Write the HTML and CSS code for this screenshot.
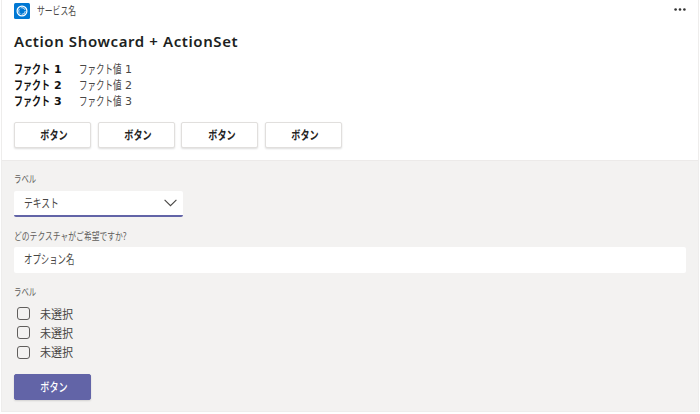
FILE: index.html
```html
<!DOCTYPE html>
<html lang="ja">
<head>
<meta charset="utf-8">
<title>Action Showcard + ActionSet</title>
<link rel="stylesheet" href="styles.css">
</head>
<body>
<main class="card">
  <section class="summary">
    <header class="service">
      <svg class="logo" viewBox="0 0 16 16">
        <rect width="16" height="16" rx="1.5" fill="#0078d4"/>
        <g fill="none" stroke="#fff">
          <circle cx="8" cy="8" r="4.9" stroke-width="1.2"/>
          <circle cx="8" cy="8" r="3.3" stroke="#cfe6f8" stroke-width="1" stroke-dasharray="5.4 1.5"/>
        </g>
      </svg>
      <span class="service-name"><span class="t">サービス名</span></span>
      <svg class="more" viewBox="0 0 12 3" fill="#333">
        <circle cx="1.6" cy="1.5" r="1.3"/><circle cx="6" cy="1.5" r="1.3"/><circle cx="10.4" cy="1.5" r="1.3"/>
      </svg>
    </header>
    <h1 class="title">Action Showcard + ActionSet</h1>
    <dl class="facts">
      <dt><span class="t">ファクト</span><span class="num">1</span></dt><dd><span class="t">ファクト値</span><span class="num">1</span></dd>
      <dt><span class="t">ファクト</span><span class="num">2</span></dt><dd><span class="t">ファクト値</span><span class="num">2</span></dd>
      <dt><span class="t">ファクト</span><span class="num">3</span></dt><dd><span class="t">ファクト値</span><span class="num">3</span></dd>
    </dl>
    <div class="actions">
      <button class="button"><span class="t">ボタン</span></button>
      <button class="button"><span class="t">ボタン</span></button>
      <button class="button"><span class="t">ボタン</span></button>
      <button class="button"><span class="t">ボタン</span></button>
    </div>
  </section>
  <section class="form">
    <div class="label"><span class="t">ラベル</span></div>
    <div class="select">
      <span class="t">テキスト</span>
      <svg class="chevron" viewBox="0 0 13 8"><path d="M.6 .8 6.5 6.7 12.4 .8" fill="none" stroke="#484644" stroke-width="1.1"/></svg>
    </div>
    <div class="label question"><span class="t">どのテクスチャがご希望ですか?</span></div>
    <div class="input"><span class="t">オプション名</span></div>
    <div class="label choices-label"><span class="t">ラベル</span></div>
    <div class="choices">
      <label class="choice"><span class="box"></span><span class="t">未選択</span></label>
      <label class="choice"><span class="box"></span><span class="t">未選択</span></label>
      <label class="choice"><span class="box"></span><span class="t">未選択</span></label>
    </div>
    <button class="button primary"><span class="t">ボタン</span></button>
  </section>
</main>
</body>
</html>
```
FILE: styles.css
```css
* { box-sizing: border-box; }
body {
  margin: 0;
  background: #fff;
  color: #484644;
  font-family: "Noto Sans", "Noto Sans CJK JP", sans-serif;
  font-size: 11px;
}
.card {
  width: 698px;
  height: 412px;
  margin-left: 1px;
  border: 1px solid #eeedec;
  border-top: 0;
  display: flex;
  flex-direction: column;
}
.t {
  display: inline-block;
  white-space: nowrap;
  transform-origin: left center;
}
.summary { height: 160px; padding: 3px 12px 0; }
.service { display: flex; align-items: center; height: 16px; }
.logo { width: 16px; height: 16px; }
.service-name { flex: 1; margin-left: 7px; line-height: 16px; }
.service-name .t { transform: scaleX(.71); }
.more { width: 12px; height: 3px; align-self: flex-start; margin-top: 5px; }
.title {
  margin: 11px 0 0;
  font: 600 15px/22px "Noto Sans", sans-serif;
  letter-spacing: .6px;
  color: #201f1e;
}
.facts {
  display: grid;
  grid-template-columns: 65px 1fr;
  grid-auto-rows: 16px;
  margin: 10px 0 0;
  font-size: 12px;
  line-height: 16px;
}
.facts dt, .facts dd { display: flex; margin: 0; }
.facts dt { font-weight: 700; color: #111; }
.facts dt .t { width: 40px; transform: scaleX(.75); }
.facts dd .t { width: 46px; transform: scaleX(.71); }
.num { font-family: "DejaVu Sans", sans-serif; font-size: 11px; }
.actions { display: flex; gap: 6.6px; margin-top: 12px; }
.button {
  display: block;
  width: 77px;
  height: 26px;
  padding: 0 0 0 4px;
  border: 1px solid #e1dfdd;
  border-radius: 2px;
  background: #fff;
  box-shadow: 0 1px 2px #0002;
  color: #252423;
  font: 700 12px/24px "Noto Sans CJK JP", sans-serif;
}
.button .t { transform: scaleX(.76); transform-origin: center; }
.form { flex: 1; padding: 11px 12px 0; background: #f3f2f1; border-top: 1px solid #eceae9; }
.label { height: 16px; font-size: 10px; line-height: 15px; color: #605e5c; }
.label .t { transform: scaleX(.74); }
.select {
  display: flex;
  align-items: center;
  justify-content: space-between;
  width: 169px;
  height: 26px;
  margin-top: 3px;
  padding: 0 6px 0 10px;
  background: #fff;
  border-bottom: 2px solid #6264a7;
  border-radius: 2px;
  font-size: 12px;
}
.select .t { transform: scaleX(.73); }
.chevron { width: 13px; height: 8px; }
.question { margin-top: 12px; }
.question .t { transform: scaleX(.78); }
.input {
  height: 26px;
  margin-top: 2px;
  padding-left: 10px;
  background: #fff;
  border-radius: 2px;
  font-size: 12px;
  line-height: 26px;
}
.input .t { transform: scaleX(.7); }
.choices-label { margin-top: 12px; }
.choices { margin-top: 3px; }
.choice { display: flex; align-items: center; height: 19.3px; padding-left: 3px; font-size: 12px; }
.choice .t { transform: scaleX(.92); margin-left: 10px; }
.box { width: 13px; height: 13px; border: 1px solid #605e5c; border-radius: 3px; }
.primary { margin-top: 12px; background: #6264a7; border-color: #6264a7; color: #fff; font-weight: 500; }
```
